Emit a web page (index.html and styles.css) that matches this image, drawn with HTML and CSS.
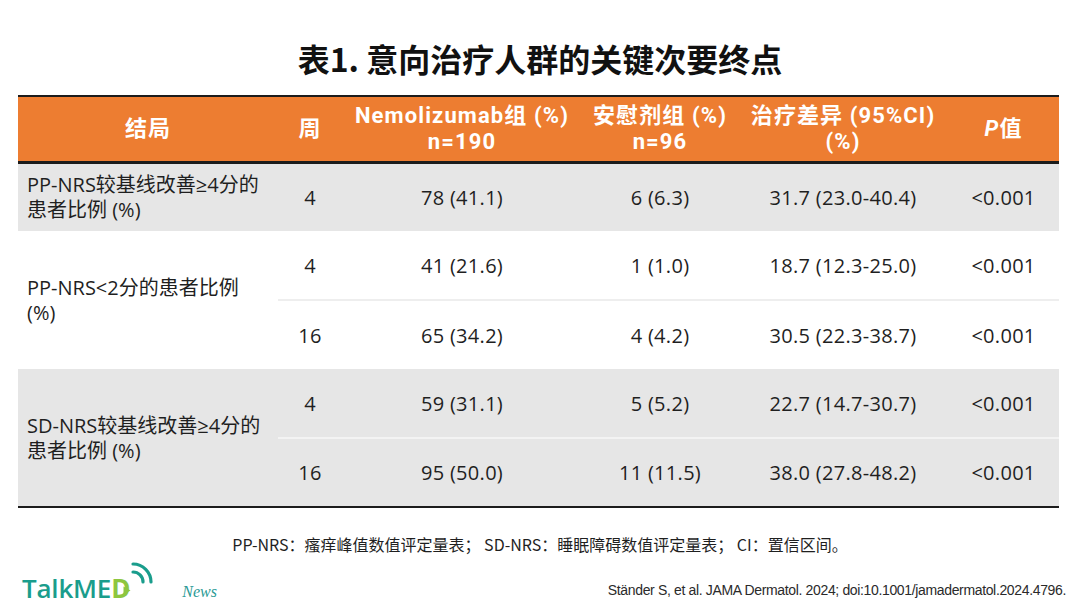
FILE: index.html
```html
<!DOCTYPE html>
<html lang="zh-CN">
<head>
<meta charset="utf-8">
<title>表1. 意向治疗人群的关键次要终点</title>
<link rel="stylesheet" href="styles.css">
</head>
<body>
<div class="page">
  <h1 class="title">表1. 意向治疗人群的关键次要终点</h1>
  <table class="data">
    <colgroup>
      <col class="c1"><col class="c2"><col class="c3"><col class="c4"><col class="c5"><col class="c6">
    </colgroup>
    <thead>
      <tr>
        <th>结局</th>
        <th>周</th>
        <th><span class="hl">Nemolizumab组 (%)</span><span class="hl">n=190</span></th>
        <th><span class="hl">安慰剂组 (%)</span><span class="hl">n=96</span></th>
        <th><span class="hl">治疗差异 (95%CI)</span><span class="hl">(%)</span></th>
        <th><i>P</i>值</th>
      </tr>
    </thead>
    <tbody>
      <tr class="shade">
        <td class="label">PP-NRS较基线改善≥4分的<br>患者比例 (%)</td>
        <td>4</td><td>78 (41.1)</td><td>6 (6.3)</td><td>31.7 (23.0-40.4)</td><td>&lt;0.001</td>
      </tr>
      <tr>
        <td class="label" rowspan="2">PP-NRS&lt;2分的患者比例<br>(%)</td>
        <td>4</td><td>41 (21.6)</td><td>1 (1.0)</td><td>18.7 (12.3-25.0)</td><td>&lt;0.001</td>
      </tr>
      <tr class="sub">
        <td>16</td><td>65 (34.2)</td><td>4 (4.2)</td><td>30.5 (22.3-38.7)</td><td>&lt;0.001</td>
      </tr>
      <tr class="shade">
        <td class="label" rowspan="2">SD-NRS较基线改善≥4分的<br>患者比例 (%)</td>
        <td>4</td><td>59 (31.1)</td><td>5 (5.2)</td><td>22.7 (14.7-30.7)</td><td>&lt;0.001</td>
      </tr>
      <tr class="shade sub">
        <td>16</td><td>95 (50.0)</td><td>11 (11.5)</td><td>38.0 (27.8-48.2)</td><td>&lt;0.001</td>
      </tr>
    </tbody>
  </table>
  <p class="note">PP-NRS：瘙痒峰值数值评定量表； SD-NRS：睡眠障碍数值评定量表； CI：置信区间。</p>
  <div class="bottom">
    <div class="logo">
      <span class="logo-word">TalkME<span class="logo-d">D</span></span>
      <svg class="logo-mark" width="30" height="30" viewBox="0 0 30 30">
        <path d="M3 14 A10 10 0 0 1 13 24" fill="none" stroke="#1a9d8c" stroke-width="3.2" stroke-linecap="round"/>
        <path d="M3 6 A18 18 0 0 1 21 24" fill="none" stroke="#1a9d8c" stroke-width="3.2" stroke-linecap="round"/>
      </svg>
      <svg class="logo-play" width="8" height="9" viewBox="0 0 8 9">
        <path d="M0.5 0.5 L7.5 4.5 L0.5 8.5 Z" fill="#8dc63f"/>
      </svg>
      <span class="news">News</span>
    </div>
    <p class="cite">Ständer S, et al. JAMA Dermatol. 2024; doi:10.1001/jamadermatol.2024.4796.</p>
  </div>
</div>
</body>
</html>
```

FILE: styles.css
```css
* { box-sizing: border-box; }
html, body { margin: 0; padding: 0; background: #fff; }
body {
  font-family: "Open Sans", "Noto Sans CJK SC", sans-serif;
  color: #1f1f1f;
}
.page {
  width: 1080px;
  height: 608px;
  overflow: hidden;
  display: flex;
  flex-direction: column;
}
.title {
  margin: 38px 0 17px;
  height: 40px;
  line-height: 40px;
  text-align: center;
  font-size: 32px;
  font-weight: 700;
  color: #111;
  font-family: "Noto Sans CJK SC", sans-serif;
}
.data {
  margin-left: 18px;
  width: 1041px;
  border-collapse: collapse;
  table-layout: fixed;
  border-top: 2px solid #1c1c1c;
  border-bottom: 2px solid #1c1c1c;
}
.c1 { width: 260px; }
.c2 { width: 64px; }
.c3 { width: 240px; }
.c4 { width: 156px; }
.c5 { width: 210px; }
.c6 { width: 111px; }
thead tr { background: #ed7d31; border-bottom: 3px solid #1c1c1c; }
th {
  height: 66px;
  padding: 0;
  color: #fff;
  font-family: "Roboto", "Noto Sans CJK SC", sans-serif;
  font-weight: 700;
  font-size: 22px;
  line-height: 26px;
  letter-spacing: 1.1px;
  text-align: center;
  vertical-align: middle;
  white-space: nowrap;
}
.hl { display: block; height: 26px; }
td {
  height: 69px;
  padding: 0;
  font-size: 20px;
  line-height: 25px;
  letter-spacing: 0.3px;
  text-align: center;
  vertical-align: middle;
  color: #1f1f1f;
  white-space: nowrap;
}
td.label { text-align: left; padding-left: 9px; letter-spacing: 0; }
tr.shade { background: #e6e6e6; }
tr.sub td { border-top: 2px solid #eeeeee; }
tr.shade.sub td { border-top: 2px solid #f3f3f3; }
.note {
  margin: 26px 0 0;
  text-align: center;
  font-size: 16px;
  line-height: 20px;
  color: #1f1f1f;
  font-family: "Noto Sans CJK SC", sans-serif;
}
.bottom {
  margin-top: auto;
  height: 52px;
  display: flex;
  justify-content: space-between;
  align-items: flex-end;
}
.logo {
  position: relative;
  width: 240px;
  height: 52px;
  display: flex;
  align-items: flex-end;
  padding: 0 0 5px 22px;
}
.logo-word {
  font-family: "Open Sans", sans-serif;
  font-weight: 600;
  font-size: 26px;
  line-height: 30px;
  color: #1a9d8c;
  letter-spacing: -0.2px;
}
.logo-d { color: #8dc63f; font-weight: 700; }
.logo-mark { position: absolute; left: 130px; top: 2px; }
.logo-play { position: absolute; left: 123px; top: 30px; }
.news {
  margin-left: 52px;
  margin-bottom: 2px;
  font-family: "Liberation Serif", serif;
  font-style: italic;
  font-size: 16px;
  color: #2a9a95;
}
.cite {
  margin: 0 14px 10px 0;
  font-family: "Liberation Sans", sans-serif;
  font-size: 14px;
  letter-spacing: -0.35px;
  color: #2a2a2a;
}
```
